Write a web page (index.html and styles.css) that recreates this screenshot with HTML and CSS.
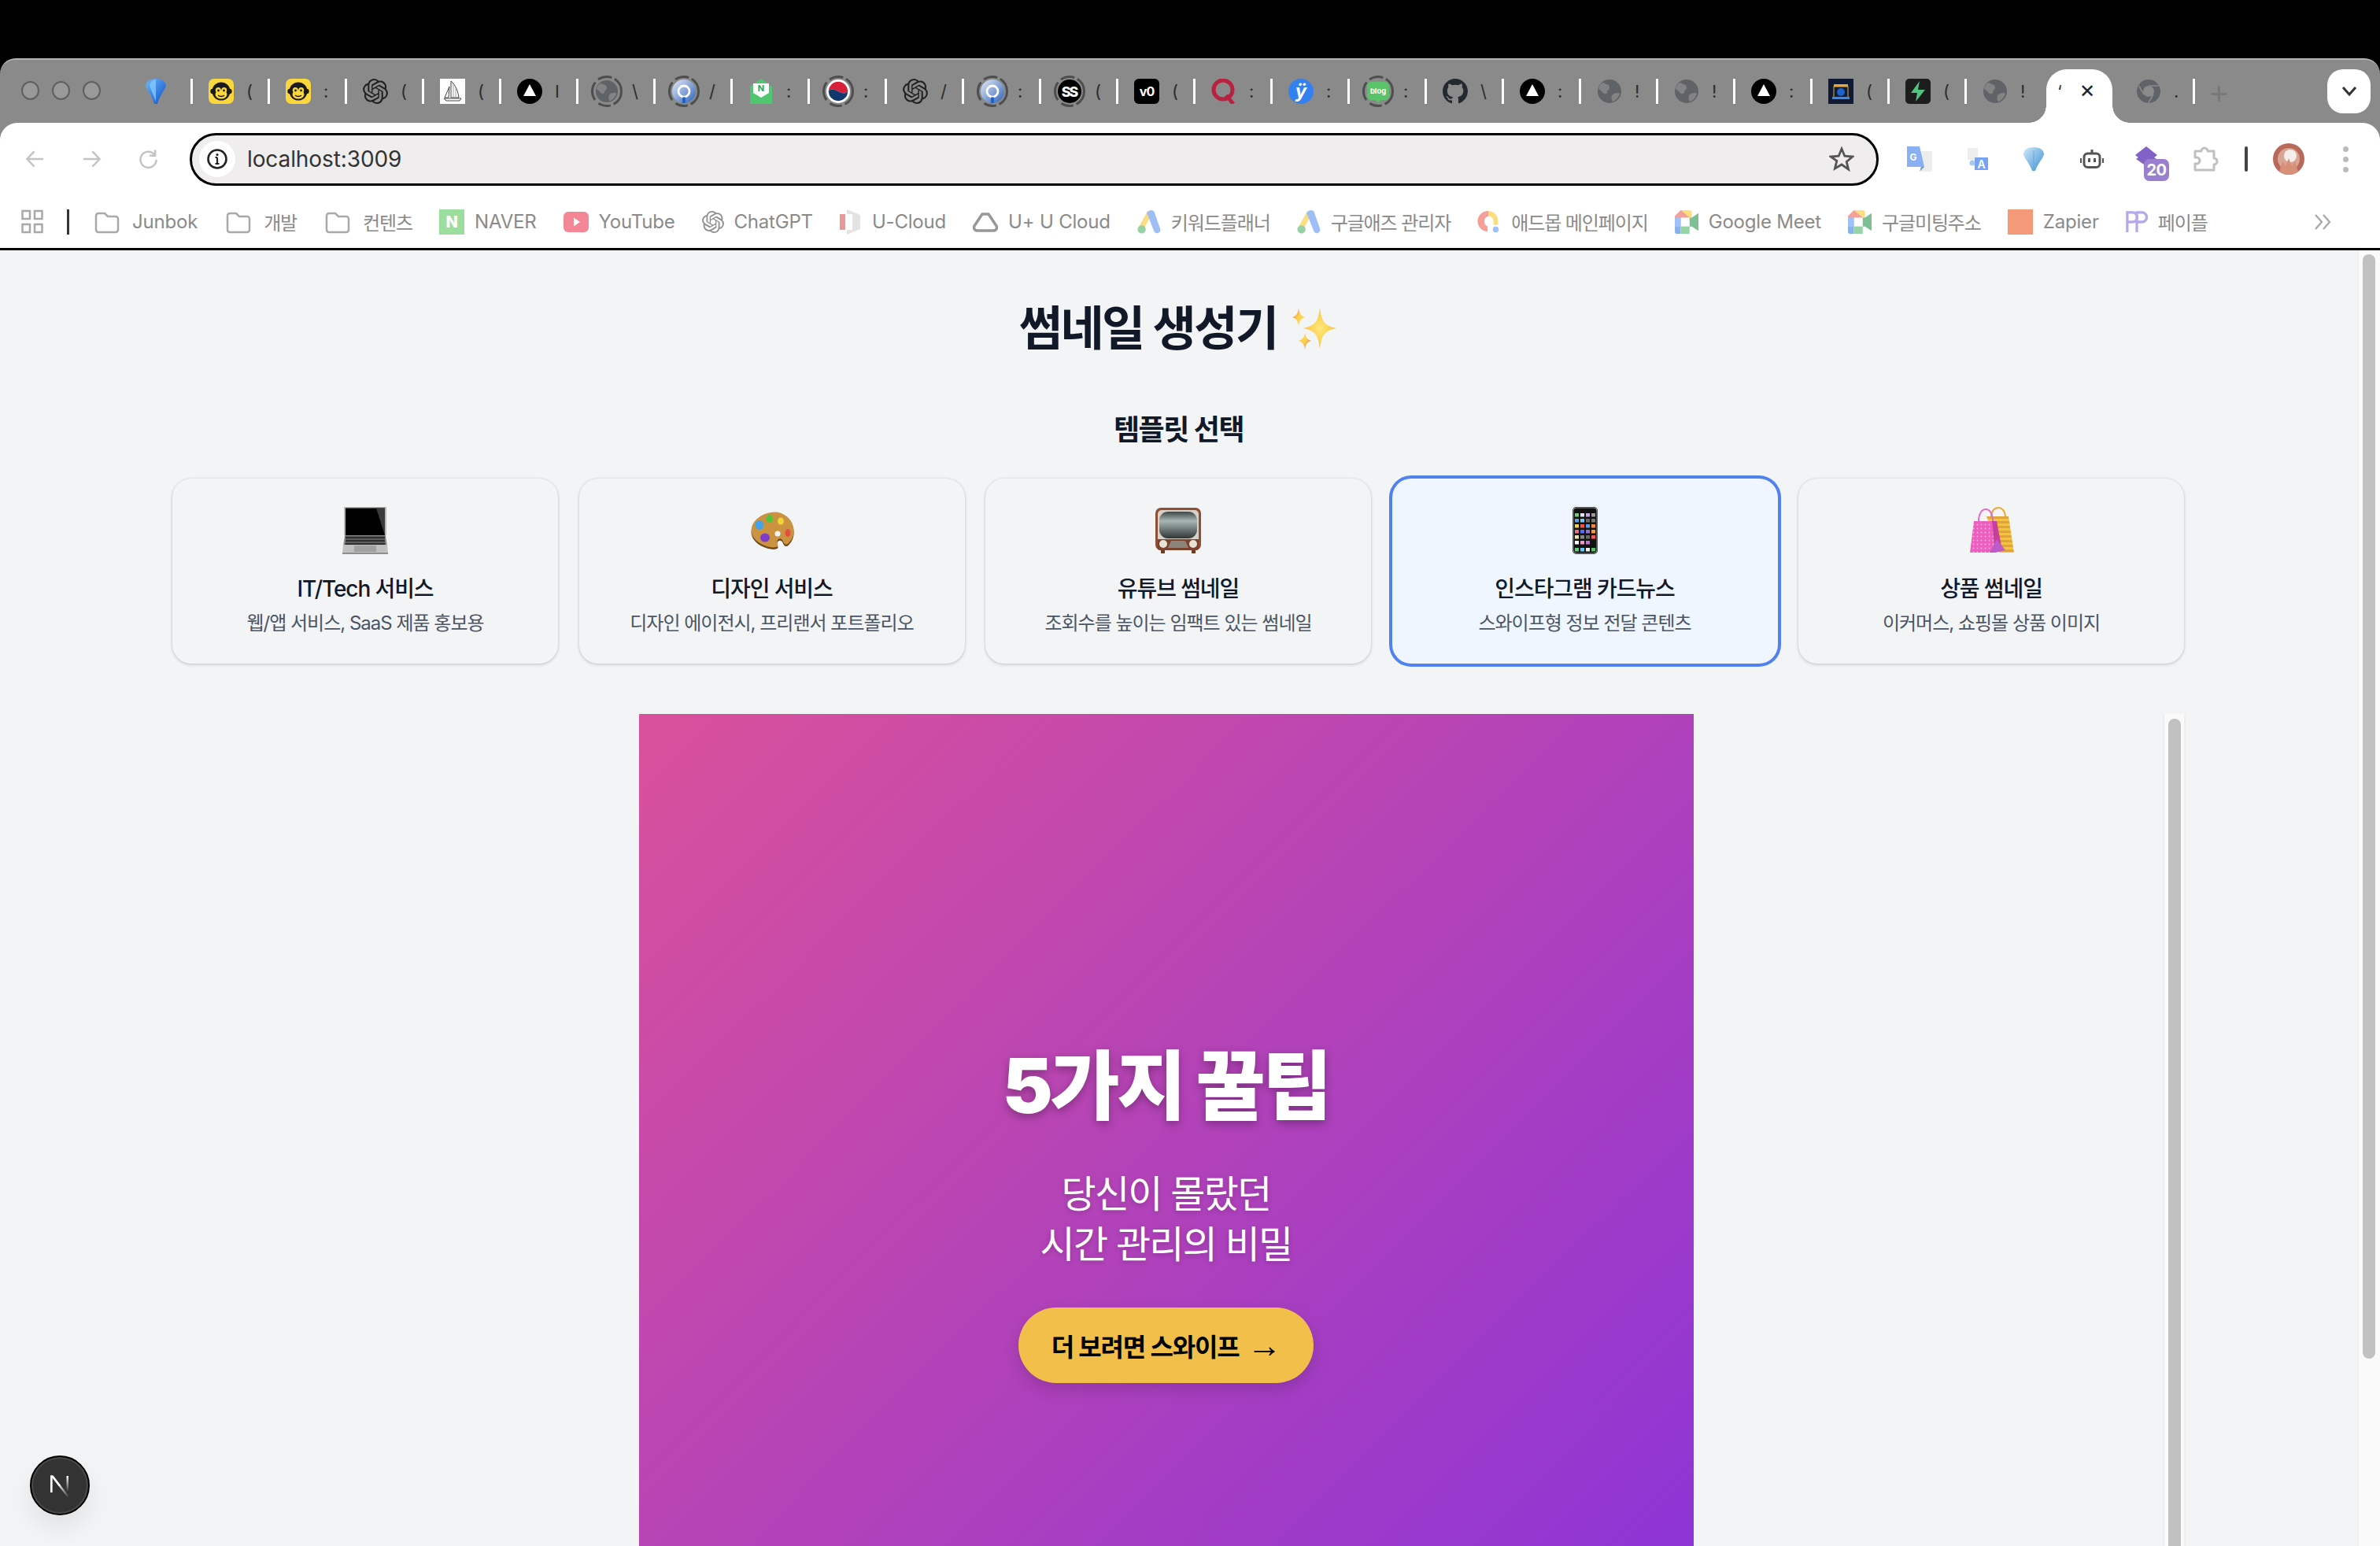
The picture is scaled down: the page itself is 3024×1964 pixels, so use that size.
FILE: index.html
```html
<!DOCTYPE html>
<html lang="ko">
<head>
<meta charset="utf-8">
<title>썸네일 생성기</title>
<link rel="stylesheet" href="styles.css">
</head>
<body>
<svg class="defs" width="0" height="0" aria-hidden="true">
  <defs>
    <linearGradient id="gDia" x1="0" y1="0" x2="1" y2="1"><stop offset="0" stop-color="#6db9ff"/><stop offset="1" stop-color="#0b4fc4"/></linearGradient>
    <linearGradient id="gC" x1="0" y1="0" x2="1" y2="1"><stop offset="0" stop-color="#e6ecf6"/><stop offset="1" stop-color="#2f62b8"/></linearGradient>
    <linearGradient id="gScr" x1="0" y1="0" x2="0" y2="1"><stop offset="0" stop-color="#3e4647"/><stop offset=".35" stop-color="#a9b6b6"/><stop offset="1" stop-color="#2f3535"/></linearGradient>
    <linearGradient id="gFun" x1="0" y1="0" x2="1" y2="1"><stop offset="0" stop-color="#cfeafb"/><stop offset="1" stop-color="#3f8fd2"/></linearGradient>
    <radialGradient id="gSpk"><stop offset="0" stop-color="#ffe680"/><stop offset=".7" stop-color="#fbcf47"/><stop offset="1" stop-color="#f2a65a"/></radialGradient>
    <symbol id="i-dia" viewBox="0 0 32 32"><path d="M16 0C9 0 4 3 3 9c1 4 8 12 11 23h4c3-11 10-19 11-23C28 3 23 0 16 0z" fill="url(#gDia)"/><path d="M16 1c-4 0-7 3-8 8l8 20z" fill="#8fd0ff" opacity=".7"/></symbol>
    <symbol id="i-monkey" viewBox="0 0 32 32"><rect width="32" height="32" rx="7" fill="#fbd63c"/><circle cx="5.500" cy="16" r="3.200" fill="#1b1b1b"/><circle cx="26.500" cy="16" r="3.200" fill="#1b1b1b"/><circle cx="16" cy="16" r="11.500" fill="#1b1b1b"/><ellipse cx="16" cy="20" rx="7.500" ry="5.500" fill="#fbd63c"/><circle cx="12.300" cy="14.500" r="3.500" fill="#fbd63c"/><circle cx="19.700" cy="14.500" r="3.500" fill="#fbd63c"/><circle cx="12.500" cy="15" r="1.400" fill="#1b1b1b"/><circle cx="19.500" cy="15" r="1.400" fill="#1b1b1b"/><path d="M12 21c2 2 6 2 8 0" fill="none" stroke="#1b1b1b" stroke-width="1.500"/></symbol>
    <symbol id="i-openai" viewBox="0 0 24 24"><path fill="#222" d="M22.2819 9.8211a5.9847 5.9847 0 0 0-.5157-4.9108 6.0462 6.0462 0 0 0-6.5098-2.9A6.0651 6.0651 0 0 0 4.9807 4.1818a5.9847 5.9847 0 0 0-3.9977 2.9 6.0462 6.0462 0 0 0 .7427 7.0966 5.98 5.98 0 0 0 .511 4.9107 6.051 6.051 0 0 0 6.5146 2.9001A5.9847 5.9847 0 0 0 13.2599 24a6.0557 6.0557 0 0 0 5.7718-4.2058 5.9894 5.9894 0 0 0 3.9977-2.9001 6.0557 6.0557 0 0 0-.7475-7.0729zm-9.022 12.6081a4.4755 4.4755 0 0 1-2.8764-1.0408l.1419-.0804 4.7783-2.7582a.7948.7948 0 0 0 .3927-.6813v-6.7369l2.02 1.1686a.071.071 0 0 1 .038.052v5.5826a4.504 4.504 0 0 1-4.4945 4.4944zm-9.6607-4.1254a4.4708 4.4708 0 0 1-.5346-3.0137l.142.0852 4.783 2.7582a.7712.7712 0 0 0 .7806 0l5.8428-3.3685v2.3324a.0804.0804 0 0 1-.0332.0615L9.74 19.9502a4.4992 4.4992 0 0 1-6.1408-1.6464zM2.3408 7.8956a4.485 4.485 0 0 1 2.3655-1.9728V11.6a.7664.7664 0 0 0 .3879.6765l5.8144 3.3543-2.0201 1.1685a.0757.0757 0 0 1-.071 0l-4.8303-2.7865A4.504 4.504 0 0 1 2.3408 7.872zm16.5963 3.8558L13.1038 8.364 15.1192 7.2a.0757.0757 0 0 1 .071 0l4.8303 2.7913a4.4944 4.4944 0 0 1-.6765 8.1042v-5.6772a.79.79 0 0 0-.407-.667zm2.0107-3.0231l-.142-.0852-4.7735-2.7818a.7759.7759 0 0 0-.7854 0L9.409 9.2297V6.8974a.0662.0662 0 0 1 .0284-.0615l4.8303-2.7866a4.4992 4.4992 0 0 1 6.6802 4.66zM8.3065 12.863l-2.02-1.1638a.0804.0804 0 0 1-.038-.0567V6.0742a4.4992 4.4992 0 0 1 7.3757-3.4537l-.142.0805L8.704 5.459a.7948.7948 0 0 0-.3927.6813zm1.0976-2.3654l2.602-1.4998 2.6069 1.4998v2.9994l-2.5974 1.4997-2.6067-1.4997Z"/></symbol>
    <symbol id="i-mj" viewBox="0 0 32 32"><rect width="32" height="32" fill="#fff"/><path d="M14 3c6 5 9 13 10 21H14zM12 10l-1 14H6z" fill="none" stroke="#444" stroke-width="1"/><path d="M17 6v18M20 11v13" stroke="#888" stroke-width=".8"/><path d="M5 25h22l-2 3H8z" fill="none" stroke="#444" stroke-width="1"/></symbol>
    <symbol id="i-tri" viewBox="0 0 32 32"><circle cx="16" cy="16" r="16" fill="#000"/><path d="M16 7l8 15H8z" fill="#fff"/></symbol>
    <symbol id="i-globe" viewBox="0 0 32 32"><circle cx="16" cy="16" r="15" fill="#5f6368"/><path d="M8 5c3 2 8 2 8 6s-3 3-3 6-4 3-6 0-5-3-5-5c1-3 3-6 6-7zM20 20c3-2 7-3 9-1-1 4-5 9-9 10-2-3-2-7 0-9z" fill="#838383"/></symbol>
    <symbol id="i-ring" viewBox="0 0 40 40"><circle cx="20" cy="20" r="18.500" fill="none" stroke="#4e4e4e" stroke-width="3" stroke-dasharray="20 4 16 6 24 5 18 4"/></symbol>
    <symbol id="i-c" viewBox="0 0 32 32"><circle cx="16" cy="16" r="16" fill="url(#gC)"/><circle cx="16" cy="16" r="7.500" fill="none" stroke="#fff" stroke-width="3"/><path d="M16 24v8" stroke="#1c5fc4" stroke-width="4"/></symbol>
    <symbol id="i-mail" viewBox="0 0 28 32"><path d="M0 10L14 0l14 10v22H0z" fill="#4fc66f"/><path d="M4 6h20v12l-10 6-10-6z" fill="#fff"/><text x="14" y="16" class="svg-n">N</text></symbol>
    <symbol id="i-kr" viewBox="0 0 32 32"><circle cx="16" cy="16" r="16" fill="#fff"/><path d="M3 16a13 13 0 0126 0c-3 4-8 3-13 0s-10-4-13 0z" fill="#d9203a"/><path d="M3 16c3-4 8-3 13 0s10 4 13 0a13 13 0 01-26 0z" fill="#12386e"/></symbol>
    <symbol id="i-ss" viewBox="0 0 32 32"><circle cx="16" cy="16" r="16" fill="#000"/><text x="15.500" y="23" class="svg-ss">SS</text></symbol>
    <symbol id="i-v0" viewBox="0 0 32 32"><rect width="32" height="32" rx="6" fill="#000"/><text x="16" y="21.500" class="svg-v0">v0</text></symbol>
    <symbol id="i-q" viewBox="0 0 32 32"><circle cx="15" cy="14" r="12" fill="none" stroke="#b8213f" stroke-width="5"/><path d="M19 21l9 11" stroke="#b8213f" stroke-width="5"/></symbol>
    <symbol id="i-y" viewBox="0 0 32 32"><circle cx="16" cy="16" r="16" fill="#3380f0"/><text x="16" y="24" class="svg-y">ÿ</text></symbol>
    <symbol id="i-blog" viewBox="0 0 32 32"><path d="M7 3h18a6 6 0 016 6v13a6 6 0 01-6 6h-6l-3 4-3-4H7a6 6 0 01-6-6V9a6 6 0 016-6z" fill="#5ac268"/><text x="16" y="19.500" class="svg-blog">blog</text></symbol>
    <symbol id="i-gh" viewBox="0 0 16 16"><path fill="#24292f" d="M8 0C3.58 0 0 3.58 0 8c0 3.54 2.29 6.53 5.47 7.59.4.07.55-.17.55-.38 0-.19-.01-.82-.01-1.49-2.01.37-2.53-.49-2.69-.94-.09-.23-.48-.94-.82-1.13-.28-.15-.68-.52-.01-.53.63-.01 1.08.58 1.23.82.72 1.21 1.87.87 2.33.66.07-.52.28-.87.51-1.07-1.78-.2-3.64-.89-3.64-3.95 0-.87.31-1.59.82-2.15-.08-.2-.36-1.02.08-2.12 0 0 .67-.21 2.2.82.64-.18 1.32-.27 2-.27.68 0 1.36.09 2 .27 1.53-1.04 2.2-.82 2.2-.82.44 1.1.16 1.92.08 2.12.51.56.82 1.27.82 2.15 0 3.07-1.87 3.75-3.65 3.95.29.25.54.73.54 1.48 0 1.07-.01 1.93-.01 2.2 0 .21.15.46.55.38A8.013 8.013 0 0016 8c0-4.42-3.58-8-8-8z"/></symbol>
    <symbol id="i-cam" viewBox="0 0 32 32"><rect width="32" height="32" fill="#101a33"/><path d="M7 7h18v5H7z" fill="#e8a93a"/><rect x="7" y="10" width="18" height="14" fill="#0f1d3d" stroke="#e8a93a"/><circle cx="16" cy="17" r="5" fill="#1d63c8"/><path d="M5 23h22v3H5z" fill="#3f86e6"/></symbol>
    <symbol id="i-bolt" viewBox="0 0 32 32"><rect width="32" height="32" rx="5" fill="#1d1d1d"/><path d="M18 3L7 18h8l-2 11 12-15h-9z" fill="#4fc57f"/></symbol>
    <symbol id="i-chrome" viewBox="0 0 32 32"><circle cx="16" cy="16" r="15" fill="#5f6368"/><circle cx="16" cy="16" r="7" fill="#8a8a8a"/><path d="M16 9h13M10 20L3.500 9M22 20l-6.500 11" stroke="#8a8a8a" stroke-width="1.500"/></symbol>
    <symbol id="i-folder" viewBox="0 0 32 32"><path d="M2 8a3 3 0 013-3h8l4 4h10a3 3 0 013 3v14a3 3 0 01-3 3H5a3 3 0 01-3-3z" fill="none" stroke="#555" stroke-width="2.500"/></symbol>
    <symbol id="i-apps" viewBox="0 0 28 32"><g fill="none" stroke="#555" stroke-width="2.500"><rect x="1.500" y="2" width="9.500" height="10"/><rect x="17" y="2" width="9.500" height="10"/><rect x="1.500" y="19" width="9.500" height="10"/><rect x="17" y="19" width="9.500" height="10"/></g></symbol>
    <symbol id="i-naver" viewBox="0 0 32 32"><rect width="32" height="32" fill="#3cbf40"/><text x="16" y="23" class="svg-naver">N</text></symbol>
    <symbol id="i-yt" viewBox="0 0 32 32"><rect y="3" width="32" height="26" rx="6" fill="#e8112d"/><path d="M13 10.500l8 5.500-8 5.500z" fill="#fff"/></symbol>
    <symbol id="i-ucloud" viewBox="0 0 28 32"><path d="M9 0l17 7v18L9 32z" fill="#c9c9c9"/><rect y="6" width="7" height="20" fill="#d33"/><rect x="8" y="6" width="8" height="20" fill="#fff"/></symbol>
    <symbol id="i-drive" viewBox="0 0 32 32"><path d="M12 6h8l10 15a4 4 0 01-3 6H5a4 4 0 01-3-6z" fill="none" stroke="#333" stroke-width="3.500" stroke-linejoin="round"/></symbol>
    <symbol id="i-ads" viewBox="0 0 32 32"><path d="M14 1L2 23l6 4L19 6z" fill="#fbbc04"/><path d="M13 4a6 6 0 0110-2l8 23a4.500 4.500 0 01-8 4z" fill="#3f7ff0"/><circle cx="6" cy="26" r="5.500" fill="#2da44e"/></symbol>
    <symbol id="i-admob" viewBox="0 0 32 32"><path d="M15 1a14 14 0 00-1 28v-7a7.500 7.500 0 011-14z" fill="#ea4335"/><path d="M15 1c8 0 13 6 13 14v5h-6v-5c0-4-3-7-7-7z" fill="#fbbc04"/><circle cx="25" cy="26" r="4" fill="#4285f4"/></symbol>
    <symbol id="i-meet" viewBox="0 0 32 32"><path d="M0 8l8-8h12v10H8v12H0z" fill="#ea4335"/><path d="M8 0h12a3 3 0 013 3v7h-3z" fill="#fbbc04"/><path d="M0 10h8v12H0z" fill="#4285f4"/><path d="M0 22h8v10H3a3 3 0 01-3-3z" fill="#1967d2"/><path d="M8 22h12v10H8z" fill="#34a853"/><path d="M20 10h3l9-6v24l-9-6h-3z" fill="#00832d"/></symbol>
    <symbol id="i-pp" viewBox="0 0 30 32"><path d="M2 30V3h7a6 6 0 010 13H2M15 30V3h7a6 6 0 010 13h-7" fill="none" stroke="#6d55d8" stroke-width="3.500"/></symbol>
    <symbol id="i-sparkle" viewBox="0 0 60 60"><path d="M37 4c2 17 6 23 21 26-15 3-19 9-21 26-2-17-6-23-21-26 15-3 19-9 21-26z" fill="url(#gSpk)"/><path d="M10 4c1 8 3 10 8 12-5 2-7 4-8 12-1-8-3-10-8-12 5-2 7-4 8-12zM18 35c1 7 3 9 8 11-5 2-7 4-8 11-1-7-3-9-8-11 5-2 7-4 8-11z" fill="url(#gSpk)"/></symbol>
    <symbol id="e-laptop" viewBox="0 0 60 60"><path d="M3 0h54v36H3z" fill="#b7b7b7"/><path d="M5 1.500h50V36H5z" fill="#000"/><path d="M44 1.500h11V36z" fill="#3b3b3b"/><path d="M4 36h52l2 14H2z" fill="#8d8d8d"/><path d="M5 37.500h50v3H5zM5 41.500h50v3H5zM4.500 45.500h51v3h-51z" fill="#2e2e2e"/><path d="M2 48h56l1 11H1z" fill="#c0c0c0"/><path d="M16 49h28v8H16z" fill="#a0a0a0"/><path d="M1 58h58v2H1z" fill="#8e8e8e"/></symbol>
    <symbol id="e-palette" viewBox="0 0 60 60"><path d="M28 7c14-3 26 6 29 18 2 9-1 16-6 21-3 3-6 1-7-2-1-4-5-5-7-2-2 4 2 7 0 8-4 3-13 1-21-3C7 42 2 34 4 26c2-9 12-17 24-19z" fill="#6e4a1c" transform="translate(0 2.500)"/><path d="M28 7c14-3 26 6 29 18 2 9-1 16-6 21-3 3-6 1-7-2-1-4-5-5-7-2-2 4 2 7 0 8-4 3-13 1-21-3C7 42 2 34 4 26c2-9 12-17 24-19z" fill="#cb9340"/><circle cx="37" cy="34" r="3.500" fill="#f3f4f6"/><ellipse cx="14" cy="23" rx="5.500" ry="6" fill="#45a4e8"/><ellipse cx="27" cy="15" rx="4.500" ry="5" fill="#55c23a"/><ellipse cx="41" cy="18" rx="4" ry="4.500" fill="#f2d33a"/><ellipse cx="50" cy="33" rx="3.500" ry="5" fill="#e44f3f"/><ellipse cx="21" cy="39" rx="6" ry="5.500" fill="#7d3cc8"/></symbol>
    <symbol id="e-tv" viewBox="0 0 60 60"><rect x="1" y="1" width="58" height="54" rx="7" fill="#8d4f37"/><rect x="4" y="4" width="52" height="48" rx="5" fill="#d8d2c6"/><rect x="6" y="6" width="48" height="34" rx="11" fill="url(#gScr)"/><path d="M4 41h52v11a3 3 0 01-3 3H7a3 3 0 01-3-3z" fill="#7b4230"/><circle cx="11" cy="47" r="5" fill="#e8e3d6"/><circle cx="49" cy="47" r="5" fill="#e8e3d6"/><path d="M21 43h18l4 9H17z" fill="#8a8578"/><path d="M8 55h5v4H8zM47 55h5v4h-5z" fill="#6e3a22"/></symbol>
    <symbol id="e-phone" viewBox="0 0 60 60"><rect x="14" y="0" width="32" height="60" rx="5" fill="#111"/><rect x="15" y="1" width="30" height="58" rx="4" fill="none" stroke="#9a9a9a" stroke-width="1"/><g><rect x="17" y="8" width="5" height="4.500" fill="#6ed06e"/><rect x="24" y="8" width="5" height="4.500" fill="#e8e4f8"/><rect x="31" y="8" width="5" height="4.500" fill="#caa6e8"/><rect x="38" y="8" width="5" height="4.500" fill="#9a9a9a"/></g><g><rect x="17" y="15" width="5" height="4.500" fill="#5aa6ee"/><rect x="24" y="15" width="5" height="4.500" fill="#7ac8f0"/><rect x="31" y="15" width="5" height="4.500" fill="#6a6a6a"/><rect x="38" y="15" width="5" height="4.500" fill="#7a7a7a"/></g><g><rect x="17" y="22" width="5" height="4.500" fill="#f3d34a"/><rect x="24" y="22" width="5" height="4.500" fill="#e85a4a"/><rect x="31" y="22" width="5" height="4.500" fill="#58a0ef"/><rect x="38" y="22" width="5" height="4.500" fill="#ef8a3c"/></g><g><rect x="17" y="29" width="5" height="4.500" fill="#f06a8a"/><rect x="24" y="29" width="5" height="4.500" fill="#5d6af0"/><rect x="31" y="29" width="5" height="4.500" fill="#9a6ae0"/><rect x="38" y="29" width="5" height="4.500" fill="#ef9a3c"/></g><g><rect x="17" y="36" width="5" height="4.500" fill="#efe6a0"/><rect x="24" y="36" width="5" height="4.500" fill="#888"/><rect x="31" y="36" width="5" height="4.500" fill="#6a6a6a"/><rect x="38" y="36" width="5" height="4.500" fill="#ee5a5a"/></g><g><rect x="17" y="43" width="5" height="4.500" fill="#fff"/><rect x="24" y="43" width="5" height="4.500" fill="#f09ad0"/><rect x="31" y="43" width="5" height="4.500" fill="#d06ae0"/></g><g><rect x="17" y="52" width="5" height="4.500" fill="#5cd07a"/><rect x="24" y="52" width="5" height="4.500" fill="#6ac8f0"/><rect x="31" y="52" width="5" height="4.500" fill="#f0f0f0"/><rect x="38" y="52" width="5" height="4.500" fill="#50c060"/></g></symbol>
    <pattern id="pDots" width="5" height="5" patternUnits="userSpaceOnUse"><rect width="5" height="5" fill="#ec5fbf"/><circle cx="2.500" cy="2.500" r=".9" fill="#f8b4e2"/></pattern>
    <pattern id="pStr" width="6" height="6" patternUnits="userSpaceOnUse"><rect width="6" height="6" fill="#f0c63c"/><rect width="6" height="3" fill="#e0a438"/></pattern>
    <symbol id="e-bags" viewBox="0 0 60 60"><path d="M30 13c0-16 18-16 18 0" fill="none" stroke="#efa83a" stroke-width="2"/><path d="M24 12h28l7 46H40z" fill="url(#pStr)"/><path d="M14 18c0-20 18-20 18 0" fill="none" stroke="#e56ac4" stroke-width="2"/><path d="M8 18h28l-1 40H3z" fill="url(#pDots)"/><path d="M31 18h6l6 32-8 8z" fill="#c73f9c"/><path d="M28 58l9-17 11 14-13 3z" fill="#bb5cc9"/></symbol>
    <symbol id="i-gtrans" viewBox="0 0 32 32"><path d="M14 6h18v26H18z" fill="#e4e4e4"/><path d="M0 0h16l6 26H0z" fill="#4a86ee"/><path d="M18 26l-2 6 6-6z" fill="#2a5fc0"/><text x="8" y="18" class="svg-g">G</text></symbol>
    <symbol id="i-trans" viewBox="0 0 26 28"><path d="M0 0h13v15H0z" fill="#e8e8e8"/><path d="M9 12h17v16H9z" fill="#4a86ee"/><text x="17.500" y="26" class="svg-a">A</text><circle cx="6" cy="19" r="3.500" fill="#8db5f5"/></symbol>
    <symbol id="i-funnel" viewBox="0 0 28 30"><path d="M14 0C7 0 1 3 1 9c1 5 8 12 11 21h4c3-9 10-16 11-21 0-6-6-9-13-9z" fill="url(#gFun)"/><path d="M14 30V4" stroke="#6aaad8" stroke-width="1"/></symbol>
    <symbol id="i-robot" viewBox="0 0 30 24"><path d="M15 0v5" stroke="#555" stroke-width="3"/><rect x="5" y="5" width="20" height="17.500" rx="4.500" fill="none" stroke="#555" stroke-width="3"/><path d="M11.500 11v5M18.500 11v5" stroke="#555" stroke-width="3"/><path d="M1 11v6M29 11v6" stroke="#555" stroke-width="2"/></symbol>
    <symbol id="i-puzzle" viewBox="0 0 32 32"><path d="M2 6h8a4 4 0 018 0h8v9a4 4 0 010 8v7H2v-8h2a4 4 0 000-8H2z" fill="none" stroke="#c0c0c0" stroke-width="3" stroke-linejoin="round"/></symbol>
    <symbol id="i-star" viewBox="0 0 32 32"><path d="M16 3l3.800 9.200 10 .8-7.600 6.400 2.400 9.700L16 23l-8.600 5.100 2.400-9.700L2.200 13l10-.8z" fill="none" stroke="#555" stroke-width="2.800"/></symbol>
    <symbol id="i-avatar" viewBox="0 0 40 40"><circle cx="20" cy="20" r="20" fill="#b8695a"/><circle cx="20" cy="20" r="14" fill="#d9a595"/><circle cx="22" cy="16" r="8" fill="#f4efec"/><path d="M8 36l4-13 4 6 4-10 4 10 4-6 4 13a20 20 0 01-24 0z" fill="#d88f78"/></symbol>
    <symbol id="i-purple" viewBox="0 0 30 28"><path d="M2 16l13-9 13 9-13 9z" fill="#7e66b8"/><path d="M15 0l14 11-14 11L1 11z" fill="#8261c8"/></symbol>
  </defs>
</svg>

<div class="window">
  <div class="tabstrip">
    <div class="lights"><span class="light"></span><span class="light"></span><span class="light"></span></div>
    <div class="tabs">
      <div class="tab first"><svg class="ti"><use href="#i-dia"/></svg></div>
      <div class="tab"><svg class="ti"><use href="#i-monkey"/></svg><span class="tt">(</span></div>
      <div class="tab"><svg class="ti"><use href="#i-monkey"/></svg><span class="tt">:</span></div>
      <div class="tab"><svg class="ti"><use href="#i-openai"/></svg><span class="tt">(</span></div>
      <div class="tab"><svg class="ti"><use href="#i-mj"/></svg><span class="tt">(</span></div>
      <div class="tab"><svg class="ti"><use href="#i-tri"/></svg><span class="tt">I</span></div>
      <div class="tab"><span class="spin"><svg class="ring"><use href="#i-ring"/></svg><svg class="ts"><use href="#i-globe"/></svg></span><span class="tt">\</span></div>
      <div class="tab"><span class="spin"><svg class="ring"><use href="#i-ring"/></svg><svg class="ts"><use href="#i-c"/></svg></span><span class="tt">/</span></div>
      <div class="tab"><svg class="ti"><use href="#i-mail"/></svg><span class="tt">:</span></div>
      <div class="tab"><span class="spin"><svg class="ring"><use href="#i-ring"/></svg><svg class="ts"><use href="#i-kr"/></svg></span><span class="tt">:</span></div>
      <div class="tab"><svg class="ti"><use href="#i-openai"/></svg><span class="tt">/</span></div>
      <div class="tab"><span class="spin"><svg class="ring"><use href="#i-ring"/></svg><svg class="ts"><use href="#i-c"/></svg></span><span class="tt">:</span></div>
      <div class="tab"><span class="spin"><svg class="ring"><use href="#i-ring"/></svg><svg class="ts"><use href="#i-ss"/></svg></span><span class="tt">(</span></div>
      <div class="tab"><svg class="ti"><use href="#i-v0"/></svg><span class="tt">(</span></div>
      <div class="tab"><svg class="ti"><use href="#i-q"/></svg><span class="tt">:</span></div>
      <div class="tab"><svg class="ti"><use href="#i-y"/></svg><span class="tt">:</span></div>
      <div class="tab"><span class="spin"><svg class="ring"><use href="#i-ring"/></svg><svg class="ts"><use href="#i-blog"/></svg></span><span class="tt">:</span></div>
      <div class="tab"><svg class="ti"><use href="#i-gh"/></svg><span class="tt">\</span></div>
      <div class="tab"><svg class="ti"><use href="#i-tri"/></svg><span class="tt">:</span></div>
      <div class="tab"><svg class="ti"><use href="#i-globe"/></svg><span class="tt">!</span></div>
      <div class="tab"><svg class="ti"><use href="#i-globe"/></svg><span class="tt">!</span></div>
      <div class="tab"><svg class="ti"><use href="#i-tri"/></svg><span class="tt">:</span></div>
      <div class="tab"><svg class="ti"><use href="#i-cam"/></svg><span class="tt">(</span></div>
      <div class="tab"><svg class="ti"><use href="#i-bolt"/></svg><span class="tt">(</span></div>
      <div class="tab last"><svg class="ti"><use href="#i-globe"/></svg><span class="tt">!</span></div>
      <div class="tab-active"><span class="tt-a">‘</span><span class="close">✕</span></div>
      <div class="tab after"><svg class="ti"><use href="#i-chrome"/></svg><span class="tt">.</span></div>
      <span class="plus">+</span>
    </div>
    <div class="dropdown"><svg width="20" height="14" viewBox="0 0 20 14"><path d="M2 2l8 9 8-9" fill="none" stroke="#333" stroke-width="3"/></svg></div>
  </div>

  <div class="toolbar">
    <div class="navs">
      <svg class="nav" viewBox="0 0 26 26"><path d="M24 13H3M12 3L2.500 13 12 23" fill="none" stroke="#c4c4c4" stroke-width="2.600"/></svg>
      <svg class="nav" viewBox="0 0 26 26"><path d="M2 13h21M14 3l9.500 10L14 23" fill="none" stroke="#c4c4c4" stroke-width="2.600"/></svg>
      <svg class="nav" viewBox="0 0 26 26"><path d="M21 7a10.500 10.500 0 10 2.500 7M22 1v7.500h-7.500" fill="none" stroke="#c4c4c4" stroke-width="2.600"/></svg>
    </div>
    <div class="omnibox">
      <span class="info"><svg width="26" height="26" viewBox="0 0 26 26"><circle cx="13" cy="13" r="11.500" fill="none" stroke="#222" stroke-width="2.600"/><path d="M13 11v8M10.500 11H13M10.500 19h5" stroke="#222" stroke-width="2.200" fill="none"/><circle cx="13" cy="7.500" r="1.600" fill="#222"/></svg></span>
      <span class="url">localhost:3009</span>
      <svg class="star"><use href="#i-star"/></svg>
    </div>
    <div class="exts">
      <svg class="ext e1"><use href="#i-gtrans"/></svg>
      <svg class="ext e2"><use href="#i-trans"/></svg>
      <svg class="ext e3"><use href="#i-funnel"/></svg>
      <svg class="ext e4"><use href="#i-robot"/></svg>
      <span class="ext-badge"><svg class="purple"><use href="#i-purple"/></svg><span class="badge">20</span></span>
      <svg class="ext e6"><use href="#i-puzzle"/></svg>
      <span class="tool-sep"></span>
      <svg class="avatar"><use href="#i-avatar"/></svg>
      <span class="dots"><i></i><i></i><i></i></span>
    </div>
  </div>

  <div class="bookmarks">
    <svg class="b-apps"><use href="#i-apps"/></svg>
    <span class="b-sep"></span>
    <div class="b-list">
      <a class="bm folder spaced"><svg class="bi"><use href="#i-folder"/></svg>Junbok</a>
      <a class="bm folder spaced ko"><svg class="bi"><use href="#i-folder"/></svg>개발</a>
      <a class="bm folder ko"><svg class="bi"><use href="#i-folder"/></svg>컨텐츠</a>
      <a class="bm"><svg class="bi"><use href="#i-naver"/></svg>NAVER</a>
      <a class="bm"><svg class="bi"><use href="#i-yt"/></svg>YouTube</a>
      <a class="bm"><svg class="bi slim"><use href="#i-openai"/></svg>ChatGPT</a>
      <a class="bm"><svg class="bi slim"><use href="#i-ucloud"/></svg>U-Cloud</a>
      <a class="bm"><svg class="bi"><use href="#i-drive"/></svg>U+ U Cloud</a>
      <a class="bm ko"><svg class="bi mid"><use href="#i-ads"/></svg>키워드플래너</a>
      <a class="bm ko"><svg class="bi mid"><use href="#i-ads"/></svg>구글애즈 관리자</a>
      <a class="bm ko"><svg class="bi mid"><use href="#i-admob"/></svg>애드몹 메인페이지</a>
      <a class="bm"><svg class="bi mid"><use href="#i-meet"/></svg>Google Meet</a>
      <a class="bm ko"><svg class="bi mid"><use href="#i-meet"/></svg>구글미팅주소</a>
      <a class="bm"><span class="zap"></span>Zapier</a>
      <a class="bm ko"><svg class="bi slim"><use href="#i-pp"/></svg>페이플</a>
    </div>
    <svg class="more" viewBox="0 0 22 24"><path d="M2 3l8 9-8 9M12 3l8 9-8 9" fill="none" stroke="#aaa" stroke-width="2.400"/></svg>
  </div>

  <main class="page">
    <div class="inner">
      <h1 class="title">썸네일 생성기 <svg class="sparkle"><use href="#i-sparkle"/></svg></h1>
      <h2 class="subtitle">템플릿 선택</h2>
      <div class="cards">
        <div class="card"><svg class="emoji"><use href="#e-laptop"/></svg><h3 class="card-t">IT/Tech 서비스</h3><p class="card-d">웹/앱 서비스, SaaS 제품 홍보용</p></div>
        <div class="card"><svg class="emoji"><use href="#e-palette"/></svg><h3 class="card-t">디자인 서비스</h3><p class="card-d">디자인 에이전시, 프리랜서 포트폴리오</p></div>
        <div class="card"><svg class="emoji"><use href="#e-tv"/></svg><h3 class="card-t">유튜브 썸네일</h3><p class="card-d">조회수를 높이는 임팩트 있는 썸네일</p></div>
        <div class="card selected"><svg class="emoji"><use href="#e-phone"/></svg><h3 class="card-t">인스타그램 카드뉴스</h3><p class="card-d">스와이프형 정보 전달 콘텐츠</p></div>
        <div class="card"><svg class="emoji"><use href="#e-bags"/></svg><h3 class="card-t">상품 썸네일</h3><p class="card-d">이커머스, 쇼핑몰 상품 이미지</p></div>
      </div>
      <div class="preview-wrap">
        <div class="preview-area">
          <div class="poster">
            <div class="poster-h">5가지 꿀팁</div>
            <div class="poster-s">당신이 몰랐던<br>시간 관리의 비밀</div>
            <div class="poster-b">더 보려면 스와이프 <span class="arrow">→</span></div>
          </div>
        </div>
        <div class="inner-scroll"><span class="inner-thumb"></span></div>
      </div>
    </div>
    <div class="page-scroll"><span class="page-thumb"></span></div>
    <div class="next-badge"><svg width="40" height="40" viewBox="0 0 40 40"><defs><linearGradient id="gN" x1="0" y1="0" x2="0" y2="1"><stop offset="0" stop-color="#fff"/><stop offset="1" stop-color="#fff" stop-opacity="0"/></linearGradient><linearGradient id="gD" gradientUnits="userSpaceOnUse" x1="18" y1="18" x2="32" y2="35"><stop offset="0" stop-color="#fff"/><stop offset="1" stop-color="#fff" stop-opacity="0"/></linearGradient></defs><path d="M9.200 29V8.500h1.500l20 26" fill="none" stroke="url(#gD)" stroke-width="2.400"/><path d="M9.200 29V10" stroke="#fff" stroke-width="2.400"/><path d="M11 9l9 11.500" stroke="#fff" stroke-width="2.400"/><rect x="28.500" y="8" width="2.500" height="20" fill="url(#gN)"/></svg></div>
  </main>
</div>
</body>
</html>
```
FILE: styles.css
```css
* { box-sizing: border-box; }
html, body { margin: 0; padding: 0; }
body {
  width: 3024px;
  height: 1964px;
  overflow: hidden;
  background: #000;
  padding-top: 74px;
  font-family: Inter, "Noto Sans CJK KR", sans-serif;
}
.defs { position: absolute; }
.svg-n { font: 700 11px Inter, sans-serif; fill: #2da44e; text-anchor: middle; }
.svg-ss { font: 800 19px Inter, sans-serif; fill: #fff; text-anchor: middle; letter-spacing: -2px; }
.svg-v0 { font: 700 16px Inter, sans-serif; fill: #fff; text-anchor: middle; letter-spacing: -1px; }
.svg-y { font: italic 700 24px Inter, sans-serif; fill: #fff; text-anchor: middle; }
.svg-blog { font: 700 10px Inter, sans-serif; fill: #fff; text-anchor: middle; }
.svg-naver { font: 800 20px Inter, sans-serif; fill: #fff; text-anchor: middle; }
.svg-g { font: 700 12px Inter, sans-serif; fill: #fff; text-anchor: middle; }
.svg-a { font: 600 14px Inter, sans-serif; fill: #fff; text-anchor: middle; }

.window {
  height: 1890px;
  background: #8a8a8a;
  border-radius: 20px 20px 0 0;
  border-top: 2px solid #b3b3b3;
  display: flex;
  flex-direction: column;
  overflow: hidden;
}

/* Tab strip */
.tabstrip {
  height: 80px;
  flex: none;
  display: flex;
  padding-left: 27px;
  position: relative;
}
.lights { display: flex; gap: 16px; padding-top: 27px; width: 147px; flex: none; }
.light {
  width: 23px;
  height: 24px;
  border-radius: 50%;
  background: #999;
  border: 2px solid #5f5f5f;
}
.tabs { display: flex; flex: none; }
.tab {
  width: 98px;
  flex: none;
  height: 32px;
  margin-top: 24px;
  display: flex;
  align-items: center;
  padding-left: 20px;
  border-right: 3px solid #fff;
  position: relative;
  overflow: hidden;
}
.tab.first { width: 71px; padding-left: 8px; }
.tab.last { width: 101px; border-right: 0; }
.tab.after { padding-left: 0; margin-left: 30px; width: 75px; }
.ti { width: 32px; height: 32px; flex: none; }
.spin { width: 32px; height: 32px; flex: none; position: relative; display: block; }
.ts { width: 30px; height: 30px; position: absolute; left: 1px; top: 1px; }
.ring { width: 40px; height: 40px; position: absolute; left: -4px; top: -4px; }
.tab:has(.spin) { overflow: visible; }
.tt {
  margin-left: 16px;
  font-size: 22px;
  line-height: 32px;
  color: #2c2c2c;
  flex: none;
  white-space: nowrap;
}
.tab-active {
  width: 84px;
  height: 68px;
  margin-top: 12px;
  flex: none;
  background: #fff;
  border-radius: 26px 26px 0 0;
  display: flex;
  align-items: center;
  padding: 0 0 12px 14px;
  position: relative;
}
.tab-active::before, .tab-active::after {
  content: "";
  position: absolute;
  bottom: 0;
  width: 22px;
  height: 22px;
  background: radial-gradient(circle at 0 0, transparent 21.500px, #fff 22px);
}
.tab-active::before { left: -22px; }
.tab-active::after { right: -22px; background: radial-gradient(circle at 100% 0, transparent 21.500px, #fff 22px); }
.tt-a { font-size: 22px; color: #333; width: 16px; }
.close { font-size: 24px; color: #222; margin-left: 12px; font-family: "DejaVu Sans", sans-serif; line-height: 1; }
.plus { margin-left: 16px; margin-top: 16px; font-size: 44px; line-height: 48px; color: #777; font-weight: 300; }
.dropdown {
  position: absolute;
  left: 2957px;
  top: 12px;
  width: 55px;
  height: 56px;
  background: #fff;
  border-radius: 20px;
  display: flex;
  align-items: center;
  justify-content: center;
}

/* Toolbar */
.toolbar {
  height: 92px;
  flex: none;
  background: #fff;
  border-radius: 22px 22px 0 0;
  display: flex;
  align-items: center;
  padding: 0 0 0 32px;
}
.navs { display: flex; gap: 47px; width: 209px; flex: none; }
.nav { width: 25px; height: 26px; }
.omnibox {
  width: 2146px;
  height: 67px;
  flex: none;
  background: #efedee;
  border: 3px solid #000;
  border-radius: 34px;
  display: flex;
  align-items: center;
  padding: 0 28px 0 9px;
}
.info {
  width: 46px;
  height: 46px;
  border-radius: 50%;
  background: #fff;
  display: flex;
  align-items: center;
  justify-content: center;
  flex: none;
}
.url { margin-left: 15px; font-size: 28px; color: #333; flex: 1; letter-spacing: -.1px; }
.star { width: 32px; height: 32px; }
.exts { display: flex; align-items: center; flex: none; margin-left: 36px; }
.ext { width: 32px; height: 32px; flex: none; }
.e1 { opacity: .65; }
.e2 { width: 26px; height: 28px; margin-left: 45px; opacity: .75; }
.e3 { width: 28px; height: 30px; margin-left: 44px; }
.e4 { width: 30px; height: 24px; margin-left: 45px; }
.ext-badge { width: 44px; height: 44px; margin-left: 39px; position: relative; flex: none; }
.purple { width: 30px; height: 28px; position: absolute; left: 0; top: 6px; }
.badge {
  position: absolute;
  left: 12px;
  top: 22px;
  width: 32px;
  height: 28px;
  background: #9a7fd1;
  border-radius: 7px;
  color: #fff;
  font-size: 20px;
  font-weight: 700;
  line-height: 28px;
  text-align: center;
  letter-spacing: -.5px;
}
.e6 { margin-left: 31px; }
.tool-sep { width: 4px; height: 32px; border-radius: 2px; background: #444; margin-left: 33px; flex: none; }
.avatar { width: 40px; height: 40px; margin-left: 32px; flex: none; }
.dots { margin-left: 49px; display: flex; flex-direction: column; gap: 6px; flex: none; }
.dots i { width: 7px; height: 7px; border-radius: 50%; background: #bbb; display: block; }

/* Bookmarks */
.bookmarks {
  height: 70px;
  flex: none;
  background: #fff;
  border-bottom: 3px solid #000;
  display: flex;
  align-items: center;
  padding-left: 27px;
  position: relative;
}
.b-apps { width: 28px; height: 32px; flex: none; opacity: .5; }
.b-sep { width: 3px; height: 32px; background: #333; margin-left: 30px; flex: none; }
.b-list { display: flex; align-items: center; gap: 34px; margin-left: 32px; flex: none; }
.bm {
  display: flex;
  align-items: center;
  gap: 13px;
  font-size: 24px;
  letter-spacing: -.2px;
  color: #8a8a8a;
  white-space: nowrap;
}
.bm.folder { gap: 16px; }
.bm.spaced { margin-right: 2px; }
.bm.ko { letter-spacing: -1.100px; }
.bi { width: 32px; height: 32px; flex: none; opacity: .5; }
.bi.slim { width: 28px; }
.bi.mid { width: 30px; }
.zap { width: 32px; height: 32px; background: #f59a78; flex: none; }
.more { width: 22px; height: 24px; position: absolute; left: 2940px; top: 22px; }

/* Page */
.page {
  flex: 1;
  background: #f3f4f6;
  position: relative;
  display: flex;
  overflow: hidden;
  min-height: 0;
}
.inner {
  width: 2995px;
  flex: none;
  padding: 0 219px;
  display: flex;
  flex-direction: column;
  align-items: stretch;
  min-height: 0;
}
.title {
  margin: 62px 0 0;
  height: 74px;
  font-size: 60px;
  line-height: 74px;
  font-weight: 700;
  color: #111827;
  text-align: center;
  letter-spacing: -2.500px;
}
.sparkle { width: 60px; height: 60px; vertical-align: -8px; margin-left: 6px; }
.subtitle {
  margin: 69px 0 0;
  height: 46px;
  font-size: 36px;
  line-height: 46px;
  font-weight: 700;
  color: #111827;
  text-align: center;
  letter-spacing: -1.500px;
}
.cards { display: flex; gap: 26.500px; margin-top: 39px; flex: none; }
.card {
  width: 490px;
  height: 235px;
  flex: none;
  background: #f3f4f6;
  border-radius: 24px;
  box-shadow: 0 2px 4px rgba(0,0,0,.12), 0 0 3px rgba(0,0,0,.14);
  display: flex;
  flex-direction: column;
  align-items: center;
  padding-top: 36px;
}
.card.selected {
  background: #eff6ff;
  box-shadow: 0 0 0 4px #4f82ee, 0 2px 4px rgba(0,0,0,.1);
}
.emoji { width: 60px; height: 60px; flex: none; }
.card-t {
  margin: 24px 0 0;
  font-size: 28px;
  line-height: 40px;
  font-weight: 500;
  color: #111827;
  letter-spacing: -1.100px;
}
.card-d {
  margin: 8px 0 0;
  font-size: 24px;
  line-height: 32px;
  font-weight: 400;
  color: #4b5563;
  letter-spacing: -1px;
}
.preview-wrap { margin-top: 64px; display: flex; flex: none; }
.preview-area { width: 2529px; padding-right: 4px; display: flex; justify-content: center; flex: none; }
.poster {
  width: 1340px;
  height: 1340px;
  flex: none;
  background: linear-gradient(135deg, #d9519b 0%, #8531dc 100%);
  display: flex;
  flex-direction: column;
  align-items: center;
  padding-top: 412px;
  color: #fff;
}
.poster-h {
  font-size: 96px;
  line-height: 120px;
  font-weight: 900;
  letter-spacing: -3.500px;
  text-shadow: 0 4px 12px rgba(0,0,0,.3);
}
.poster-s {
  margin-top: 46px;
  font-size: 48px;
  line-height: 64px;
  font-weight: 400;
  text-align: center;
  letter-spacing: -1.800px;
  text-shadow: 0 2px 6px rgba(0,0,0,.2);
}
.poster-b {
  margin-top: 48px;
  width: 375px;
  height: 96px;
  border-radius: 48px;
  background: #f2c04a;
  color: #000;
  font-size: 32px;
  font-weight: 700;
  letter-spacing: -1.200px;
  display: flex;
  align-items: center;
  justify-content: center;
  gap: 10px;
  box-shadow: 0 8px 20px rgba(0,0,0,.15);
}
.arrow { font-family: "Liberation Sans", sans-serif; font-size: 44px; line-height: 1; font-weight: 400; }
.inner-scroll {
  width: 29px;
  flex: none;
  height: 1100px;
  background: #fafafa;
  border-left: 2px solid #eee;
  border-right: 2px solid #eee;
  padding: 6px 6px 0 5px;
}
.inner-thumb { display: block; width: 16px; height: 1100px; border-radius: 8px; background: #c1c1c1; }
.page-scroll {
  width: 29px;
  flex: none;
  background: #fafafa;
  border-left: 2px solid #eee;
  padding: 5px 0 0 5px;
  height: 100%;
}
.page-thumb { display: block; width: 16px; height: 1403px; border-radius: 8px; background: #c1c1c1; }
.next-badge {
  position: absolute;
  left: 38px;
  bottom: 39px;
  width: 76px;
  height: 76px;
  border-radius: 50%;
  background: #333;
  border: 2px solid #000;
  box-shadow: inset 0 0 0 2px #4a4a4a, 0 16px 32px rgba(0,0,0,.08);
  display: flex;
  align-items: center;
  justify-content: center;
}
```
